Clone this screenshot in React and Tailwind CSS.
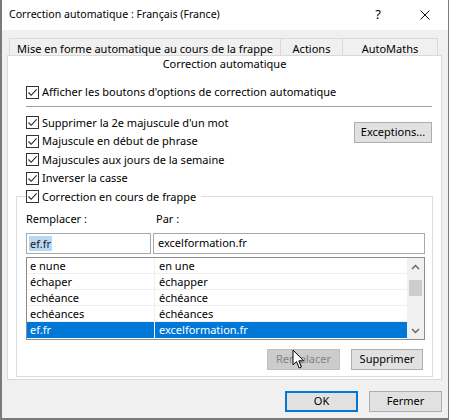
import React from 'react';

const Check = ({ className = '' }) => (
    <span className={`inline-flex w-[13px] h-[13px] shrink-0 items-center justify-center border border-[#333] bg-white ${className}`}>
        <svg width="11" height="11" viewBox="0 0 11 11">
            <path d="M1.5 5.5 L4.2 8.3 L9.6 2.4" fill="none" stroke="#222" strokeWidth="1.1" />
        </svg>
    </span>
);

const Option = ({ label }) => (
    <div className="flex items-center h-[18.5px] gap-[3px] whitespace-nowrap">
        <Check />
        <span>{label}</span>
    </div>
);

const Btn = ({ children, className = '' }) => (
    <div className={`flex items-center justify-center h-[21px] border ${className}`}>{children}</div>
);

const rows = [
    ['e nune', 'en une'],
    ['échaper', 'échapper'],
    ['echéance', 'échéance'],
    ['echéances', 'échéances'],
    ['ef.fr', 'excelformation.fr'],
];

const App = () => {
    return (
        <div
            className="relative w-[449px] h-[420px] bg-[#f0f0f0] border-l-2 border-r border-b-2 border-[#7a7a7a] text-[11px] text-black overflow-hidden"
            style={{ fontFamily: '"Segoe UI", "Noto Sans", sans-serif' }}
        >
            {/* title bar */}
            <div className="flex items-center h-[30px] bg-white pl-[7px] pr-[18px] text-[10.6px]">
                <span className="flex-1">Correction automatique : Français (France)</span>
                <span className="w-[16px] text-center text-[13px] mr-[34px]">?</span>
                <svg width="10" height="10" viewBox="0 0 10 10">
                    <path d="M0.5 0.5 L9.5 9.5 M9.5 0.5 L0.5 9.5" stroke="#111" strokeWidth="1" />
                </svg>
            </div>

            {/* tabs */}
            <div className="flex mt-[8px] ml-[7px] h-[17px] whitespace-nowrap">
                <div className="w-[272px] border border-b-0 border-[#d9d9d9] text-center leading-[15px] pt-[2px]">Mise en forme automatique au cours de la frappe</div>
                <div className="w-[62px] border border-l-0 border-b-0 border-[#d9d9d9] text-center leading-[15px] pt-[2px]">Actions</div>
                <div className="w-[95px] border border-l-0 border-b-0 border-[#d9d9d9] text-center leading-[15px] pt-[2px]">AutoMaths</div>
            </div>

            {/* panel */}
            <div className="ml-[5px] w-[435px] h-[325px] bg-white border border-[#d9d9d9]">
                <div className="h-[15px] leading-[15px] text-center">Correction automatique</div>

                <div className="mt-[12px] pl-[18px]">
                    <Option label="Afficher les boutons d'options de correction automatique" />
                </div>
                <div className="mt-[4px] ml-[18px] w-[406px] h-px bg-[#a0a0a0]" />

                <div className="flex mt-[7px] pl-[18px] pr-[9px]">
                    <div className="flex-1">
                        <Option label="Supprimer la 2e majuscule d'un mot" />
                        <Option label="Majuscule en début de phrase" />
                        <Option label="Majuscules aux jours de la semaine" />
                        <Option label="Inverser la casse" />
                    </div>
                    <Btn className="mt-[8px] w-[78px] bg-[#e1e1e1] border-[#adadad]">Exceptions...</Btn>
                </div>

                <fieldset className="ml-[8px] w-[417px] border border-[#dcdcdc] pl-[9px] pr-[7px] pb-[6px]">
                    <legend className="pr-[5px]">
                        <Option label="Correction en cours de frappe" />
                    </legend>
                    <div className="mt-[5px] h-[16px] flex leading-[16px]">
                        <span className="w-[130px]">Remplacer :</span>
                        <span>Par :</span>
                    </div>
                    <div className="flex gap-[2px] mt-[6px]">
                        <div className="w-[125px] h-[21px] border border-[#a8a8a8] flex items-center pl-[2px]">
                            <span className="bg-[#b8d8f4] text-[#1a1a1a] leading-[15px] px-px">ef.fr</span>
                        </div>
                        <div className="flex-1 h-[21px] border border-[#a8a8a8] flex items-center pl-[4px]">excelformation.fr</div>
                    </div>

                    <div className="mt-[3px] h-[83px] border border-[#8c8c8c] flex">
                        <div className="flex-1">
                            {rows.map(([a, b], i) => {
                                const sel = i === rows.length - 1;
                                return (
                                    <div key={a} className={`flex h-[16px] leading-[15px] ${sel ? 'bg-[#0078d7] text-white' : 'border-b border-[#f0f0f0]'}`}>
                                        <span className={`w-[128px] pl-[3px] border-r ${sel ? 'border-white' : 'border-[#f0f0f0]'}`}>{a}</span>
                                        <span className="flex-1 pl-[4px]">{b}</span>
                                    </div>
                                );
                            })}
                        </div>
                        <div className="w-[17px] bg-[#f0f0f0] flex flex-col items-center">
                            <svg className="mt-[6px]" width="9" height="6" viewBox="0 0 9 6">
                                <path d="M1 5 L4.5 1.5 L8 5" fill="none" stroke="#606060" strokeWidth="1.4" />
                            </svg>
                            <div className="mt-[10px] w-[13px] h-[16px] bg-[#cdcdcd]" />
                            <div className="flex-1" />
                            <svg className="mb-[5px]" width="9" height="6" viewBox="0 0 9 6">
                                <path d="M1 1 L4.5 4.5 L8 1" fill="none" stroke="#606060" strokeWidth="1.4" />
                            </svg>
                        </div>
                    </div>

                    <div className="flex justify-end gap-[11px] mt-[9px] pr-[2px]">
                        <Btn className="w-[73px] bg-[#cccccc] border-[#bfbfbf] text-[#838383]">Remplacer</Btn>
                        <Btn className="w-[72px] bg-[#e1e1e1] border-[#adadad]">Supprimer</Btn>
                    </div>
                </fieldset>
            </div>

            {/* dialog buttons */}
            <div className="flex justify-end gap-[11px] mt-[11px] pr-[6px]">
                <Btn className="w-[73px] bg-[#e1e1e1] border-2 border-[#0078d7]">OK</Btn>
                <Btn className="w-[73px] bg-[#e1e1e1] border-[#adadad]">Fermer</Btn>
            </div>

            {/* mouse cursor */}
            <svg className="absolute left-[290px] top-[349px]" width="13" height="21" viewBox="0 0 13 21">
                <path d="M1 1 L1 16 L4.5 12.6 L7.2 19 L9.4 18 L6.8 11.8 L11.6 11.8 Z" fill="white" stroke="black" strokeWidth="1" strokeLinejoin="round" />
            </svg>
        </div>
    );
};

export default App;
